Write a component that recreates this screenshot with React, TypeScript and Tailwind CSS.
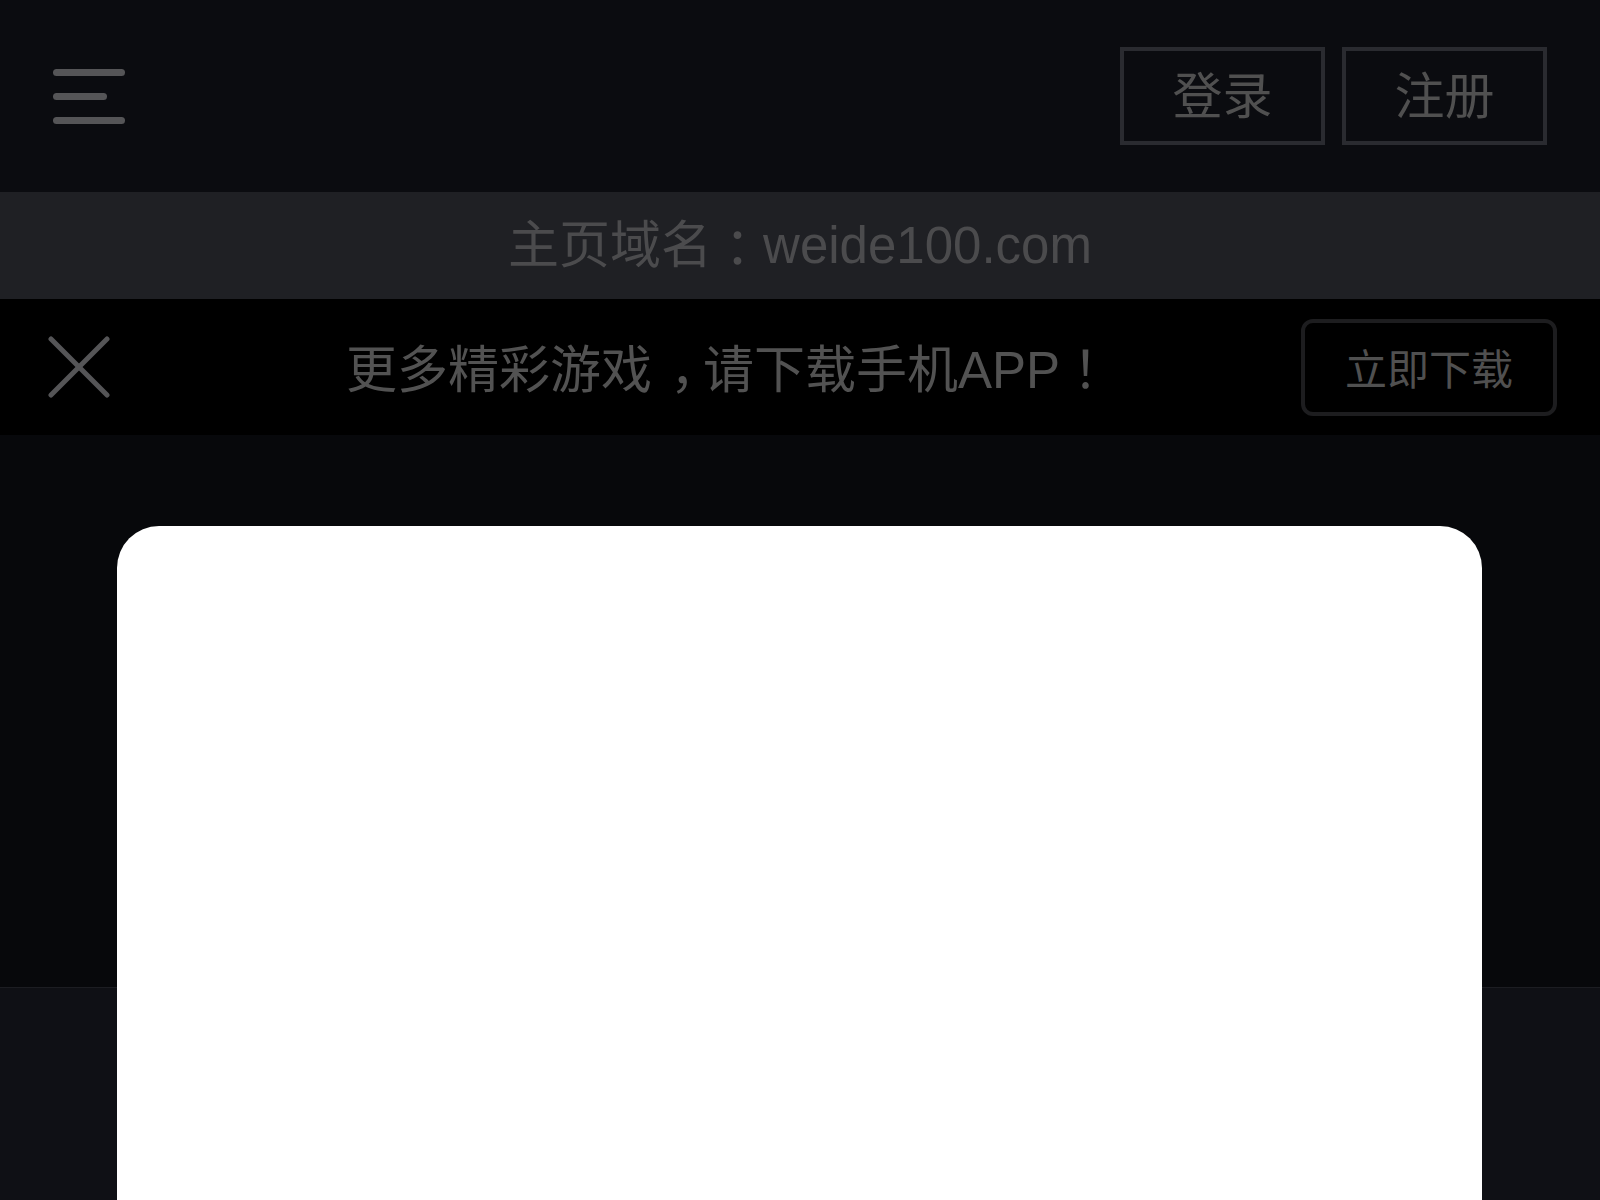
const tc = { fontFamily: '"Noto Sans CJK TC", "Noto Sans CJK SC", sans-serif' };

export default function App() {
  return (
    <div
      className="relative w-[1600px] h-[1200px] overflow-hidden bg-[#07080b] flex flex-col"
      style={{ fontFamily: '"Liberation Sans", "Noto Sans CJK SC", sans-serif' }}
    >
      <header className="h-[192px] shrink-0 bg-[#0b0c10] flex items-center justify-between pl-[53px] pr-[53px]">
        <div className="flex flex-col gap-[17px]">
          <span className="block w-[72px] h-[7px] rounded-full bg-[#555557]" />
          <span className="block w-[54px] h-[7px] rounded-full bg-[#555557]" />
          <span className="block w-[72px] h-[7px] rounded-full bg-[#555557]" />
        </div>
        <div className="flex gap-[17px]">
          <button className="w-[205px] h-[98px] border-4 border-[#2a2b30] text-[50px] leading-none text-[#505050] flex items-center justify-center pt-[2px]">
            登录
          </button>
          <button className="w-[205px] h-[98px] border-4 border-[#2a2b30] text-[50px] leading-none text-[#505050] flex items-center justify-center pt-[2px]">
            注册
          </button>
        </div>
      </header>

      <div className="h-[107px] shrink-0 bg-[#1f2024] flex items-center justify-center text-[51px] leading-none text-[#4b4b4d]">
        主页域名<span style={tc}>：</span>weide100.com
      </div>

      <div className="h-[136px] shrink-0 bg-black flex items-center pl-[48px] pr-[43px]">
        <svg width="62" height="62" viewBox="0 0 62 62" fill="none" stroke="#555557" strokeWidth="5" strokeLinecap="round">
          <line x1="3" y1="3" x2="59" y2="59" />
          <line x1="59" y1="3" x2="3" y2="59" />
        </svg>
        <span className="ml-[236px] text-[51px] leading-none text-[#525252] pt-[2px] whitespace-nowrap">
          更多精彩游<span className="tracking-[18px]">戏</span><span className="tracking-[-18px]">，</span>请下载手机APP<span style={tc}>！</span>
        </span>
        <button className="ml-auto w-[256px] h-[97px] rounded-[12px] border-4 border-[#1d1d1f] bg-black text-[42px] leading-none text-[#505050] flex items-center justify-center pt-[8px]">
          立即下载
        </button>
      </div>

      <div className="h-[552px] shrink-0 bg-[#07080b]" />
      <div className="flex-1 bg-[#0f1015] border-t border-[#1c1d22]" />

      <div className="absolute left-[117px] top-[526px] w-[1365px] h-[720px] bg-white rounded-t-[42px]" />
    </div>
  );
}
